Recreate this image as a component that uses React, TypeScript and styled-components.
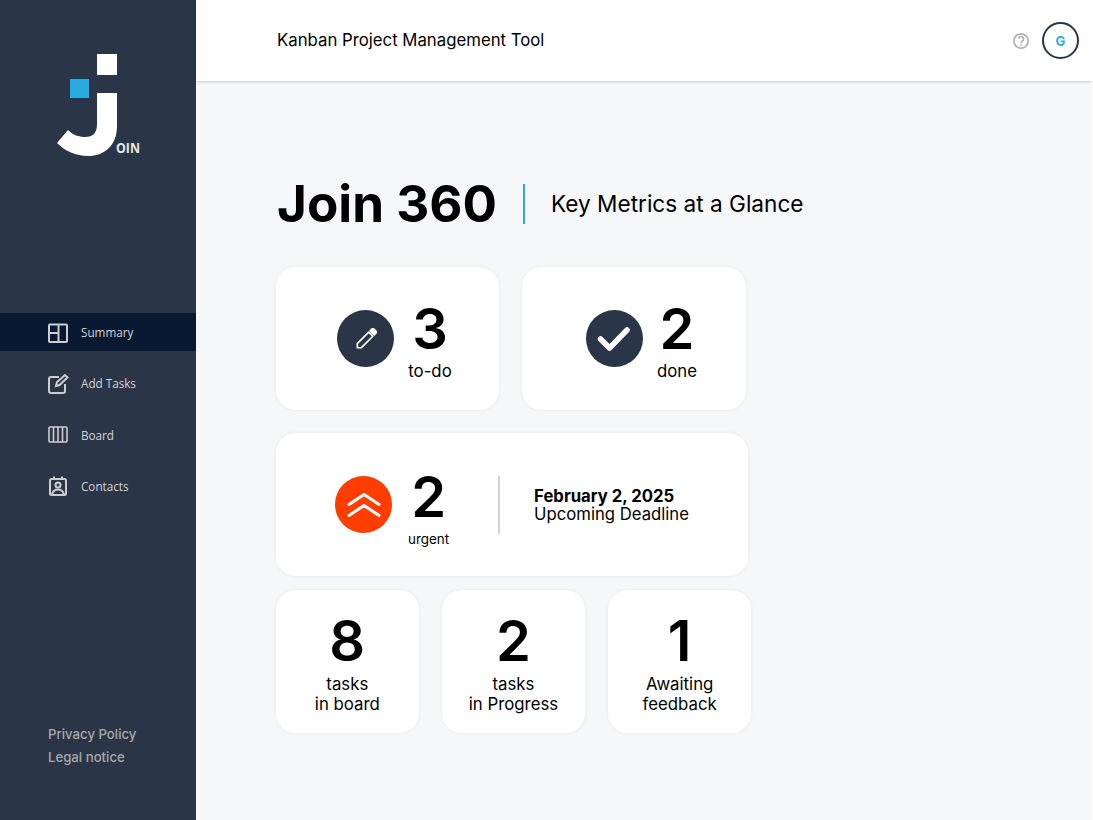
import React from "react";
import styled, { createGlobalStyle } from "styled-components";

const Global = createGlobalStyle`
  html, body { margin: 0; padding: 0; height: 100%; background: #fff; }
  * { box-sizing: border-box; }
  body { font-family: Inter, "Liberation Sans", sans-serif; color: #000; }
`;

const Page = styled.div`
  display: flex;
  width: 1092px;
  height: 820px;
  overflow: hidden;
  background: #f6f7f8;
`;

const Sidebar = styled.aside`
  width: 196px;
  flex: none;
  background: #2a3647;
  display: flex;
  flex-direction: column;
  padding-top: 54px;
`;

const LogoBox = styled.div`
  height: 259px;
  padding-left: 56px;
`;

const Nav = styled.nav`
  display: flex;
  flex-direction: column;
  gap: 13px;
`;

const NavItem = styled.a<{ $active?: boolean }>`
  display: flex;
  align-items: center;
  height: 38.3px;
  padding-left: 48px;
  gap: 12px;
  font-family: "Open Sans", sans-serif;
  font-size: 11.7px;
  color: #d4d4d4;
  background: ${(p) => (p.$active ? "#091931" : "transparent")};
  svg { flex: none; }
`;

const SideFooter = styled.div`
  margin-top: auto;
  padding: 0 0 54px 48px;
  display: flex;
  flex-direction: column;
  gap: 6px;
  font-family: Inter, sans-serif;
  font-size: 13.2px;
  font-weight: 500;
  line-height: 17px;
  color: #a8a8a8;
`;

const Content = styled.div`
  flex: 1;
  min-width: 0;
  display: flex;
  flex-direction: column;
`;

const Header = styled.header`
  height: 81px;
  flex: none;
  background: #fff;
  box-shadow: 0 1px 3px rgba(0, 0, 0, 0.16);
  display: flex;
  align-items: center;
  padding: 0 13px 0 81px;
  font-size: 16.75px;
`;

const HeaderTitle = styled.div`
  flex: 1;
  padding-bottom: 2px;
`;

const HelpIcon = styled.svg`
  margin-right: 12px;
`;

const Avatar = styled.div`
  width: 37px;
  height: 37px;
  border-radius: 50%;
  border: 2px solid #2a3647;
  display: flex;
  align-items: center;
  justify-content: center;
  font-size: 13px;
  font-weight: 700;
  color: #29abe2;
`;

const Main = styled.main`
  padding: 93px 0 0 80px;
`;

const TitleRow = styled.div`
  display: flex;
  align-items: center;
  height: 60px;
  margin-bottom: 33px;
`;

const Title = styled.h1`
  margin: 0 0 0 1px;
  padding-bottom: 2px;
  font-size: 51.2px;
  line-height: 60px;
  font-weight: 700;
`;

const TitleRule = styled.div`
  width: 2px;
  height: 40px;
  background: #29abe2;
  margin: 0 26px;
`;

const Subtitle = styled.div`
  font-size: 22.6px;
  padding-bottom: 2px;
`;

const Row = styled.div<{ $gap: number; $mb: number }>`
  display: flex;
  gap: ${(p) => p.$gap}px;
  margin-bottom: ${(p) => p.$mb}px;
`;

const Card = styled.div<{ $w: number; $pl?: number }>`
  width: ${(p) => p.$w}px;
  height: 143px;
  padding-left: ${(p) => p.$pl ?? 0}px;
  background: #fff;
  border-radius: 20px;
  box-shadow: 0 0 4px rgba(0, 0, 0, 0.06);
  display: flex;
  align-items: center;
  justify-content: center;
`;

const StackCard = styled(Card)`
  flex-direction: column;
  padding-bottom: 2px;
`;

const Circle = styled.div<{ $bg: string }>`
  width: 57px;
  height: 57px;
  border-radius: 50%;
  background: ${(p) => p.$bg};
  display: flex;
  align-items: center;
  justify-content: center;
  flex: none;
`;

const Metric = styled.div<{ $gap: number }>`
  display: flex;
  flex-direction: column;
  align-items: center;
  margin-left: ${(p) => p.$gap}px;
  margin-bottom: 2px;
`;

const UrgentMetric = styled(Metric)`
  margin-bottom: 0;
  margin-top: 2px;
`;

const BigNum = styled.div`
  font-size: 56px;
  line-height: 68px;
  font-weight: 600;
`;

const MetricLabel = styled.div<{ $small?: boolean }>`
  font-size: ${(p) => (p.$small ? 13.4 : 16.8)}px;
  line-height: 20px;
  margin-top: -2px;
  text-align: center;
`;

const StackLabel = styled(MetricLabel)`
  margin-top: -1px;
`;

const Divider = styled.div`
  width: 2px;
  height: 58px;
  background: #d1d1d1;
  margin: 0 34px 0 49px;
`;

const Deadline = styled.div`
  font-size: 16.7px;
  line-height: 18px;
`;

const DeadlineDate = styled.div`
  font-weight: 700;
`;

const Logo = () => (
  <svg width="90" height="104" viewBox="0 0 90 104">
    <rect x="41" y="0" width="20" height="21" fill="#fff" />
    <rect x="14" y="25" width="19" height="19" fill="#29abe2" />
    <path d="M41 39H61V72C61 92 48 102 32 102C20 102 9 97 1 89L12 76C17 81 23 83 29 83C37 83 41 79 41 70Z" fill="#fff" />
    <text x="60" y="99" fontFamily="'Open Sans', sans-serif" fontWeight="700" fontSize="14" fill="#e6e6e6" textLength="24" lengthAdjust="spacingAndGlyphs">OIN</text>
  </svg>
);

const s = { fill: "none", stroke: "#cdcdcd", strokeWidth: 2 } as const;

const SummaryIcon = () => (
  <svg width="21" height="21" viewBox="0 0 21 21" {...s}>
    <rect x="1" y="2.500" width="18" height="17.500" rx="1" />
    <path d="M10.500 2.500V20M1 11H10.500" />
  </svg>
);
const AddIcon = () => (
  <svg width="21" height="21" viewBox="0 0 21 21" {...s}>
    <path d="M11 4H3a2 2 0 0 0-2 2v12a2 2 0 0 0 2 2h12a2 2 0 0 0 2-2v-7" />
    <path d="M8 13l1-4 8-7 2.500 2.500-8 7.500z" />
  </svg>
);
const BoardIcon = () => (
  <svg width="21" height="21" viewBox="0 0 21 21" {...s} strokeWidth={1.6}>
    <rect x="1" y="3" width="18" height="15" rx="1" />
    <path d="M5.500 3V18M10 3V18M14.500 3V18" />
  </svg>
);
const ContactsIcon = () => (
  <svg width="21" height="21" viewBox="0 0 21 21" {...s}>
    <rect x="2" y="3" width="16" height="16" rx="1.500" />
    <path d="M6 0.500V4M14 0.500V4" />
    <circle cx="10" cy="9" r="2.500" />
    <path d="M4 18.500c1-4 3.500-5 6-5s5 1 6 5" />
  </svg>
);

const PencilIcon = () => (
  <svg width="22" height="22" viewBox="0 0 24 24" fill="none" stroke="#fff" strokeWidth="1.800" strokeLinejoin="round">
    <path d="M2.500 21.500V17L15 4.500L19.500 9L7 21.500Z" />
    <path d="M16.500 3l1.500-1.500a2 2 0 0 1 2.800 0l1.700 1.700a2 2 0 0 1 0 2.800L21 7.500z" fill="#fff" />
  </svg>
);
const CheckIcon = () => (
  <svg width="34" height="26" viewBox="0 0 34 26" fill="none" stroke="#fff" strokeWidth="5.500" strokeLinecap="round" strokeLinejoin="round">
    <path d="M3.500 13L12.500 22L30 4" />
  </svg>
);
const UrgentIcon = () => (
  <svg width="34" height="26" viewBox="0 0 34 26" fill="none" stroke="#fff" strokeWidth="3" strokeLinecap="round" strokeLinejoin="round">
    <path d="M2 12.500L17 2.500L32 12.500" />
    <path d="M2 23.500L17 13.500L32 23.500" />
  </svg>
);

export default function App() {
  return (
    <>
      <Global />
      <Page>
        <Sidebar>
          <LogoBox><Logo /></LogoBox>
          <Nav>
            <NavItem $active><SummaryIcon />Summary</NavItem>
            <NavItem><AddIcon />Add Tasks</NavItem>
            <NavItem><BoardIcon />Board</NavItem>
            <NavItem><ContactsIcon />Contacts</NavItem>
          </Nav>
          <SideFooter>
            <span>Privacy Policy</span>
            <span>Legal notice</span>
          </SideFooter>
        </Sidebar>
        <Content>
          <Header>
            <HeaderTitle>Kanban Project Management Tool</HeaderTitle>
            <HelpIcon width="18" height="18" viewBox="0 0 18 18" fill="none" stroke="#b0b0b0" strokeWidth="1.700">
              <circle cx="9" cy="9" r="7.200" />
              <path d="M6.500 7a2.500 2.500 0 1 1 3.900 2.100c-.9.600-1.400 1-1.400 2.100" />
              <path d="M9 12.600v1.400" />
            </HelpIcon>
            <Avatar>G</Avatar>
          </Header>
          <Main>
            <TitleRow>
              <Title>Join 360</Title>
              <TitleRule />
              <Subtitle>Key Metrics at a Glance</Subtitle>
            </TitleRow>
            <Row $gap={23} $mb={23}>
              <Card $w={223} $pl={14}>
                <Circle $bg="#2a3647"><PencilIcon /></Circle>
                <Metric $gap={14}><BigNum>3</BigNum><MetricLabel>to-do</MetricLabel></Metric>
              </Card>
              <Card $w={224} $pl={15}>
                <Circle $bg="#2a3647"><CheckIcon /></Circle>
                <Metric $gap={14}><BigNum>2</BigNum><MetricLabel>done</MetricLabel></Metric>
              </Card>
            </Row>
            <Row $gap={0} $mb={14}>
              <Card $w={472}>
                <Circle $bg="#ff3d00"><UrgentIcon /></Circle>
                <UrgentMetric $gap={16}><BigNum>2</BigNum><MetricLabel $small>urgent</MetricLabel></UrgentMetric>
                <Divider />
                <Deadline>
                  <DeadlineDate>February 2, 2025</DeadlineDate>
                  Upcoming Deadline
                </Deadline>
              </Card>
            </Row>
            <Row $gap={23.6} $mb={0}>
              <StackCard $w={142.6}><BigNum>8</BigNum><StackLabel>tasks<br />in board</StackLabel></StackCard>
              <StackCard $w={142.6}><BigNum>2</BigNum><StackLabel>tasks<br />in Progress</StackLabel></StackCard>
              <StackCard $w={142.6}><BigNum>1</BigNum><StackLabel>Awaiting<br />feedback</StackLabel></StackCard>
            </Row>
          </Main>
        </Content>
      </Page>
    </>
  );
}
